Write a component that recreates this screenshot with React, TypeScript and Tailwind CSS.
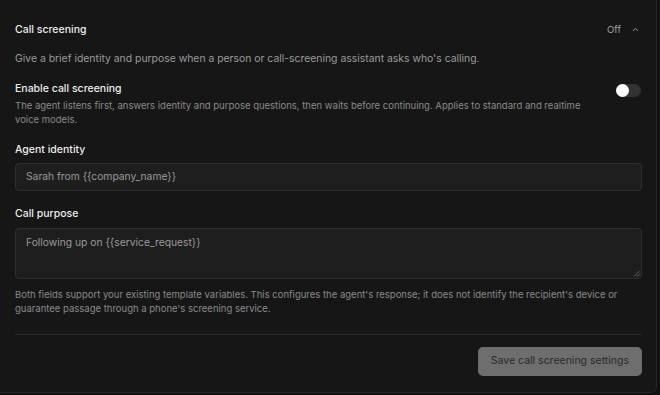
export default function App() {
  return (
    <div className="h-[395px] w-[660px] overflow-hidden bg-[#111111]" style={{ fontFamily: 'Inter, "Noto Sans", sans-serif' }}>
      <div className="h-[393px] w-[657px] rounded-br-[6px] border-r border-b border-[#262626] bg-[#161616] pl-[15px] pr-[15px]">
        <div className="flex items-center justify-between pt-[22px]">
          <h2 className="text-[10.5px] font-medium text-[#ededed]">Call screening</h2>
          <div className="flex items-center gap-[10px] pr-[1px]">
            <span className="text-[9.5px] text-[#a3a3a3]">Off</span>
            <svg width="9" height="9" viewBox="0 0 24 24" fill="none" stroke="#a3a3a3" strokeWidth="2.5" strokeLinecap="round" strokeLinejoin="round">
              <path d="M6 15l6-6 6 6" />
            </svg>
          </div>
        </div>
        <p className="mt-[13px] text-[10.4px] text-[#9a9a9a]">Give a brief identity and purpose when a person or call-screening assistant asks who's calling.</p>

        <div className="mt-[15px] flex items-start justify-between">
          <div>
            <p className="text-[10.5px] font-medium text-[#ececec]">Enable call screening</p>
            <p className="mt-[2px] max-w-[580px] text-[9.5px] leading-[14px] text-[#8a8a8a]">The agent listens first, answers identity and purpose questions, then waits before continuing. Applies to standard and realtime voice models.</p>
          </div>
          <div className="mt-[3px] flex h-[13px] w-[25px] shrink-0 items-center rounded-full bg-[#333333]">
            <div className="h-[13px] w-[13px] rounded-full bg-white" />
          </div>
        </div>

        <p className="mt-[15px] text-[10.5px] font-medium text-[#ececec]">Agent identity</p>
        <div className="mt-[5px] flex h-[28px] w-[627px] items-center rounded-[4px] border border-[#2e2e2e] bg-[#1e1e1e] px-[10px] text-[10.3px] text-[#9a9a9a]">
          Sarah from {'{{company_name}}'}
        </div>

        <p className="mt-[15px] text-[10.5px] font-medium text-[#ececec]">Call purpose</p>
        <div className="relative mt-[6px] h-[51px] w-[627px] rounded-[4px] border border-[#2e2e2e] bg-[#1e1e1e] px-[10px] pt-[6px] text-[10.3px] text-[#9a9a9a]">
          Following up on {'{{service_request}}'}
          <svg className="absolute right-[1px] bottom-[1px]" width="7" height="7" viewBox="0 0 7 7" stroke="#777" strokeWidth="0.8">
            <path d="M6.5 1L1 6.5M6.5 4L4 6.5" />
          </svg>
        </div>

        <p className="mt-[9px] max-w-[627px] text-[9.5px] leading-[14px] text-[#8a8a8a]">Both fields support your existing template variables. This configures the agent's response; it does not identify the recipient's device or guarantee passage through a phone's screening service.</p>

        <div className="mt-[18px] w-[627px] border-t border-[#282828]" />

        <div className="flex w-[627px] justify-end pt-[12px]">
          <button className="h-[29px] rounded-[5px] bg-[#6e6e6e] px-[13px] text-[10.5px] text-[#2a2a2a]">Save call screening settings</button>
        </div>
      </div>
    </div>
  );
}
